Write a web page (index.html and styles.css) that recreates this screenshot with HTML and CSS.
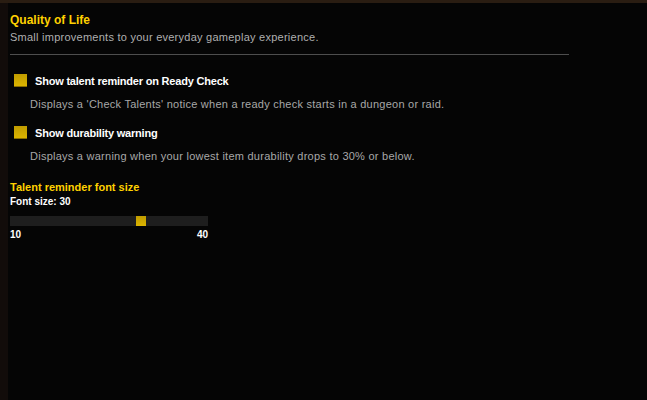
FILE: index.html
```html
<!DOCTYPE html>
<html>
<head>
<meta charset="utf-8">
<link rel="stylesheet" href="styles.css">
</head>
<body>
<div class="frame">
  <div class="panel">
    <h1 class="title">Quality of Life</h1>
    <p class="subtitle">Small improvements to your everyday gameplay experience.</p>
    <div class="rule"></div>
    <div class="option">
      <div class="check-row"><span class="box"></span><span class="label">Show talent reminder on Ready Check</span></div>
      <p class="desc">Displays a 'Check Talents' notice when a ready check starts in a dungeon or raid.</p>
    </div>
    <div class="option">
      <div class="check-row"><span class="box"></span><span class="label">Show durability warning</span></div>
      <p class="desc">Displays a warning when your lowest item durability drops to 30% or below.</p>
    </div>
    <div class="slider-block">
      <div class="slider-title">Talent reminder font size</div>
      <div class="slider-value">Font size: 30</div>
      <div class="track"><span class="thumb" style="left: 126px"></span></div>
      <div class="range"><span>10</span><span>40</span></div>
    </div>
  </div>
</div>
</body>
</html>
```

FILE: styles.css
```css
* { box-sizing: border-box; }
html, body { margin: 0; padding: 0; }
body {
  width: 647px;
  height: 400px;
  overflow: hidden;
  background: #140d0a;
  font-family: "Liberation Sans", Arial, sans-serif;
}
.frame {
  height: 400px;
  padding: 3px 0 0 8px;
  background: linear-gradient(#2a1d12 0, #2a1d12 3px, #120c0a 3px);
}
.panel {
  height: 397px;
  background: #050505;
  padding: 10px 0 0 2px;
}
.title {
  margin: 0;
  font-size: 12px;
  line-height: 15px;
  font-weight: bold;
  color: #ffd100;
}
.subtitle {
  margin: 2px 0 0;
  font-size: 11px;
  line-height: 14px;
  letter-spacing: 0.25px;
  color: #b0b0b0;
}
.rule {
  width: 559px;
  height: 1px;
  background: #4e4e4e;
  margin-top: 10px;
}
.option { padding-left: 4px; }
.check-row {
  display: flex;
  align-items: center;
  gap: 8px;
  margin-top: 19px;
  height: 13px;
}
.box {
  width: 13px;
  height: 13px;
  background: linear-gradient(#c09c00, #dcb400);
  border-bottom: 1px solid #8a6e00;
}
.label {
  font-size: 11px;
  font-weight: bold;
  letter-spacing: -0.2px;
  color: #ffffff;
}
.desc {
  margin: 10px 0 0 16px;
  font-size: 11px;
  line-height: 14px;
  letter-spacing: 0.25px;
  color: #a8a8a8;
}
.option + .option .check-row { margin-top: 15px; }
.slider-block { margin-top: 17px; width: 198px; }
.slider-title {
  font-size: 11px;
  line-height: 14px;
  font-weight: bold;
  color: #ffd100;
}
.slider-value {
  font-size: 10px;
  line-height: 13px;
  font-weight: bold;
  color: #ffffff;
  margin-top: 1px;
}
.track {
  position: relative;
  height: 10px;
  background: #1e1e1e;
  margin-top: 8px;
}
.thumb {
  position: absolute;
  top: 0;
  width: 10px;
  height: 10px;
  background: linear-gradient(#c09c00, #dcb400);
}
.range {
  display: flex;
  justify-content: space-between;
  font-size: 10px;
  line-height: 13px;
  font-weight: bold;
  color: #ffffff;
  margin-top: 2px;
}
```
